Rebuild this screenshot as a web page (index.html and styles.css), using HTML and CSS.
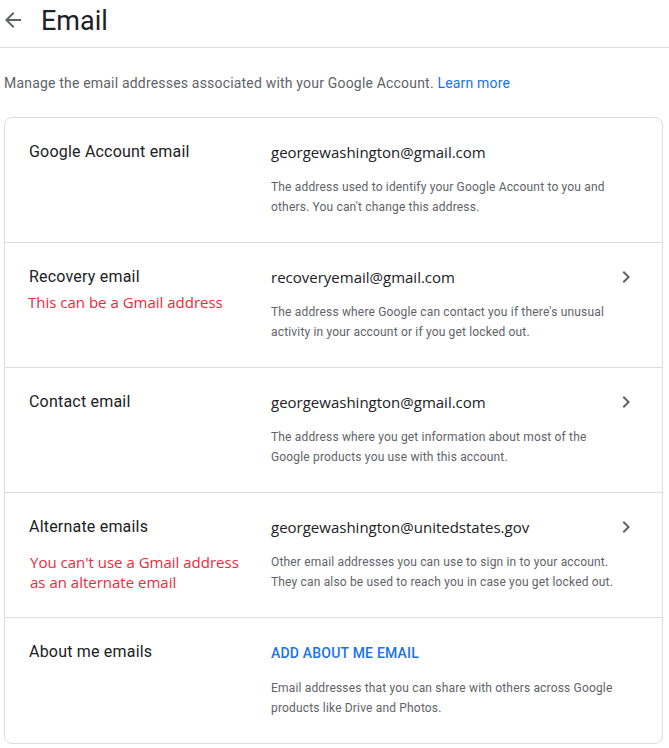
FILE: index.html
```html
<!DOCTYPE html>
<html lang="en">
<head>
<meta charset="utf-8">
<title>Email</title>
<link rel="stylesheet" href="styles.css">
</head>
<body>
<header class="topbar">
  <span class="back">
    <svg viewBox="0 0 24 24" width="24" height="24"><path d="M20 11H7.83l5.59-5.59L12 4l-8 8 8 8 1.41-1.41L7.83 13H20v-2z" fill="#5f6368"/></svg>
  </span>
  <h1 class="title">Email</h1>
</header>
<main class="page">
  <p class="intro">Manage the email addresses associated with your Google Account. <a class="link" href="#">Learn more</a></p>
  <section class="card">
    <div class="row">
      <div class="label">Google Account email</div>
      <div class="value">
        <div class="addr">georgewashington@gmail.com</div>
        <div class="desc">The address used to identify your Google Account to you and others. You can't change this address.</div>
      </div>
      <div class="icon"></div>
    </div>
    <div class="row">
      <div class="label">Recovery email
        <div class="note note-near">This can be a Gmail address</div>
      </div>
      <div class="value">
        <div class="addr">recoveryemail@gmail.com</div>
        <div class="desc">The address where Google can contact you if there's unusual activity in your account or if you get locked out.</div>
      </div>
      <div class="icon"><svg viewBox="0 0 24 24" width="24" height="24"><path d="M10 6L8.59 7.41 13.17 12l-4.58 4.59L10 18l6-6z" fill="#5f6368"/></svg></div>
    </div>
    <div class="row">
      <div class="label">Contact email</div>
      <div class="value">
        <div class="addr">georgewashington@gmail.com</div>
        <div class="desc">The address where you get information about most of the Google products you use with this account.</div>
      </div>
      <div class="icon"><svg viewBox="0 0 24 24" width="24" height="24"><path d="M10 6L8.59 7.41 13.17 12l-4.58 4.59L10 18l6-6z" fill="#5f6368"/></svg></div>
    </div>
    <div class="row">
      <div class="label">Alternate emails
        <div class="note note-far">You can't use a Gmail address<br>as an alternate email</div>
      </div>
      <div class="value">
        <div class="addr">georgewashington@unitedstates.gov</div>
        <div class="desc">Other email addresses you can use to sign in to your account. They can also be used to reach you in case you get locked out.</div>
      </div>
      <div class="icon"><svg viewBox="0 0 24 24" width="24" height="24"><path d="M10 6L8.59 7.41 13.17 12l-4.58 4.59L10 18l6-6z" fill="#5f6368"/></svg></div>
    </div>
    <div class="row">
      <div class="label">About me emails</div>
      <div class="value">
        <div class="addr"><a class="action" href="#">ADD ABOUT ME EMAIL</a></div>
        <div class="desc">Email addresses that you can share with others across Google products like Drive and Photos.</div>
      </div>
      <div class="icon"></div>
    </div>
  </section>
</main>
</body>
</html>
```
FILE: styles.css
```css
* { box-sizing: border-box; }
html, body { margin: 0; padding: 0; background: #fff; }
body {
  font-family: Roboto, "Liberation Sans", Arial, sans-serif;
  color: #202124;
}
.topbar {
  display: flex;
  align-items: flex-start;
  height: 48px;
  border-bottom: 1px solid #dadce0;
  padding: 3px 0 0 1px;
}
.back {
  display: flex;
  width: 24px;
  height: 24px;
  margin-top: 5px;
  margin-right: 16px;
}
.title {
  margin: 0;
  font-size: 27px;
  font-weight: 400;
  line-height: 36px;
  color: #202124;
}
.page {
  margin: 0 6px 0 4px;
}
.intro {
  margin: 25px 0 24px;
  font-size: 14px;
  line-height: 20px;
  letter-spacing: 0.19px;
  color: #5f6368;
}
.link {
  color: #1a73e8;
  text-decoration: none;
}
.card {
  border: 1px solid #dadce0;
  border-radius: 8px;
}
.row {
  display: grid;
  grid-template-columns: 242px 1fr 24px;
  padding: 22px 24px 25px;
  border-top: 1px solid #dadce0;
}
.row:first-child { border-top: 0; }
.label {
  font-size: 16px;
  line-height: 24px;
  letter-spacing: 0.2px;
  color: #202124;
}
.note {
  font-family: "Open Sans", "Noto Sans", sans-serif;
  font-size: 15px;
  line-height: 20px;
  letter-spacing: 0;
  color: #ec2a3c;
}
.note-near { margin-top: 3px; margin-left: -1px; }
.note-far { margin-top: 13px; margin-left: 1px; }
.value { min-width: 0; }
.addr {
  font-family: "Open Sans", "Noto Sans", sans-serif;
  font-size: 15px;
  line-height: 24px;
  color: #202124;
}
.row-shift .addr { margin-top: 2px; }
.action {
  font-family: Roboto, "Liberation Sans", Arial, sans-serif;
  color: #1a73e8;
  font-size: 14px;
  font-weight: 500;
  letter-spacing: 0.2px;
  text-decoration: none;
}
.desc {
  margin-top: 13px;
  margin-right: -8px;
  font-size: 12px;
  line-height: 20px;
  letter-spacing: 0.17px;
  color: #5f6368;
}
.icon {
  display: flex;
  align-items: flex-start;
}
.icon svg { display: block; }
```
